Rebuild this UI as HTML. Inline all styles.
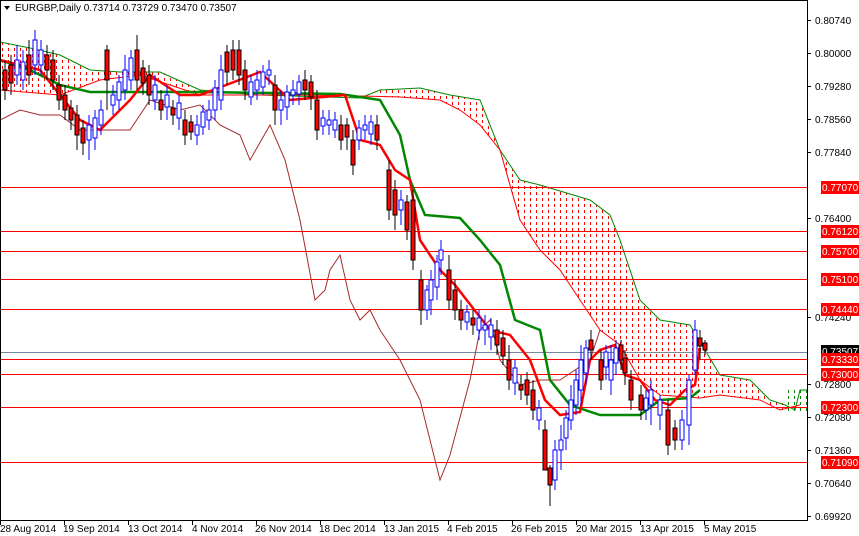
<!DOCTYPE html>
<html><head><meta charset="utf-8"><style>
html,body{margin:0;padding:0;background:#fff;width:859px;height:536px;overflow:hidden}
svg{display:block;font-family:"Liberation Sans",sans-serif}
</style></head><body>
<svg width="859" height="536" viewBox="0 0 859 536" xmlns="http://www.w3.org/2000/svg">
<defs>
<pattern id="rd" width="6" height="6" patternUnits="userSpaceOnUse"><rect x="2" y="0" width="1" height="3" fill="#f00"/></pattern>
<pattern id="gd" width="6" height="6" patternUnits="userSpaceOnUse"><rect x="2" y="0" width="1" height="3" fill="#080"/></pattern>
<clipPath id="pc"><rect x="0" y="0" width="807" height="520"/></clipPath>
</defs>
<rect width="859" height="536" fill="#fff"/>
<g clip-path="url(#pc)">
<polygon fill="url(#rd)" stroke="none" points="0,42 30,48 60,55 90,70 120,72 160,72 200,90 260,95 360,98 380,90 420,88 450,95 480,100 500,150 520,180 540,185 590,200 610,215 620,240 640,300 660,320 690,325 720,375 750,380 770,400 790,405 790,410 780,410 760,400 720,395 700,398 660,395 640,380 620,345 600,330 580,300 560,270 540,250 520,220 500,150 480,125 460,110 440,100 400,97 360,96 300,95 200,95 140,75 100,80 60,95 0,90"/>
<rect x="785" y="388" width="22" height="24" fill="url(#gd)"/>
<polyline fill="none" stroke="#080" stroke-width="1" points="0,42 30,48 60,55 90,70 120,72 160,72 200,90 260,95 360,98 380,90 420,88 450,95 480,100 500,150 520,180 540,185 590,200 610,215 620,240 640,300 660,320 690,325 720,375 750,380 770,400 785,405 795,410 800,390 809,390"/>
<polyline fill="none" stroke="#f00" stroke-width="1" points="0,90 60,95 100,80 140,75 200,95 300,95 360,96 400,97 440,100 460,110 480,125 500,150 520,220 540,250 560,270 580,300 600,330 620,345 640,380 660,395 700,398 720,395 760,400 780,410 800,405"/>
<g fill="#f00" shape-rendering="crispEdges">
<rect x="0" y="187" width="807" height="1"/><rect x="0" y="231" width="807" height="1"/>
<rect x="0" y="251" width="807" height="1"/><rect x="0" y="279" width="807" height="1"/>
<rect x="0" y="309" width="807" height="1"/><rect x="0" y="359" width="807" height="1"/>
<rect x="0" y="374" width="807" height="1"/><rect x="0" y="407" width="807" height="1"/>
<rect x="0" y="462" width="807" height="1"/>
</g>
<rect x="0" y="352" width="807" height="1" fill="#789" shape-rendering="crispEdges"/>
<polyline fill="none" stroke="#a52a2a" stroke-width="1" points="0,120 20,110 40,115 60,115 80,130 100,130 130,130 150,100 180,110 200,105 220,125 240,135 250,160 270,125 285,160 300,220 315,300 325,290 330,270 340,255 350,300 360,320 370,310 380,330 400,360 420,400 440,480 450,455 470,380 480,330 490,320 500,360 520,385 540,380 560,380 575,370 590,360 600,330"/>
<polyline fill="none" stroke="#080" stroke-width="2.5" points="0,60 30,70 60,85 90,92 200,92 340,94 380,100 400,135 410,180 425,215 460,218 480,240 500,265 515,320 540,330 550,380 570,405 600,415 640,415 660,400 690,398 700,390"/>
<polyline fill="none" stroke="#f00" stroke-width="2.5" points="0,60 40,70 80,120 100,130 130,100 150,75 180,95 200,95 260,72 290,100 345,95 360,140 380,145 395,170 410,180 420,240 440,270 455,285 490,330 510,335 530,360 545,400 560,415 580,412 590,360 600,350 615,345 625,375 640,380 655,400 670,405 685,390 695,385 700,348"/>
<g stroke-width="1">
<g stroke="#000" fill="#f00">
<line x1="5" y1="60" x2="5" y2="100"/><rect x="3" y="70" width="4" height="20"/>
<line x1="11" y1="55" x2="11" y2="95"/><rect x="9" y="65" width="4" height="18"/>
<line x1="29" y1="40" x2="29" y2="85"/><rect x="27" y="55" width="4" height="20"/>
<line x1="47" y1="45" x2="47" y2="80"/><rect x="45" y="55" width="4" height="15"/>
<line x1="53" y1="50" x2="53" y2="90"/><rect x="51" y="60" width="4" height="20"/>
<line x1="59" y1="75" x2="59" y2="110"/><rect x="57" y="85" width="4" height="15"/>
<line x1="65" y1="85" x2="65" y2="120"/><rect x="63" y="95" width="4" height="15"/>
<line x1="71" y1="100" x2="71" y2="130"/><rect x="69" y="108" width="4" height="12"/>
<line x1="77" y1="105" x2="77" y2="150"/><rect x="75" y="115" width="4" height="20"/>
<line x1="83" y1="120" x2="83" y2="155"/><rect x="81" y="128" width="4" height="15"/>
<line x1="107" y1="45" x2="107" y2="110"/><rect x="105" y="50" width="4" height="30"/>
<line x1="137" y1="35" x2="137" y2="90"/><rect x="135" y="50" width="4" height="30"/>
<line x1="143" y1="60" x2="143" y2="95"/><rect x="141" y="68" width="4" height="15"/>
<line x1="149" y1="65" x2="149" y2="105"/><rect x="147" y="75" width="4" height="20"/>
<line x1="161" y1="90" x2="161" y2="120"/><rect x="159" y="100" width="4" height="10"/>
<line x1="173" y1="100" x2="173" y2="125"/><rect x="171" y="108" width="4" height="7"/>
<line x1="185" y1="110" x2="185" y2="145"/><rect x="183" y="120" width="4" height="15"/>
<line x1="191" y1="115" x2="191" y2="140"/><rect x="189" y="122" width="4" height="10"/>
<line x1="227" y1="45" x2="227" y2="85"/><rect x="225" y="52" width="4" height="20"/>
<line x1="233" y1="40" x2="233" y2="80"/><rect x="231" y="50" width="4" height="20"/>
<line x1="239" y1="40" x2="239" y2="85"/><rect x="237" y="50" width="4" height="25"/>
<line x1="245" y1="60" x2="245" y2="100"/><rect x="243" y="70" width="4" height="20"/>
<line x1="275" y1="75" x2="275" y2="125"/><rect x="273" y="85" width="4" height="25"/>
<line x1="305" y1="70" x2="305" y2="100"/><rect x="303" y="80" width="4" height="10"/>
<line x1="311" y1="75" x2="311" y2="110"/><rect x="309" y="82" width="4" height="15"/>
<line x1="317" y1="90" x2="317" y2="140"/><rect x="315" y="100" width="4" height="30"/>
<line x1="341" y1="115" x2="341" y2="150"/><rect x="339" y="125" width="4" height="15"/>
<line x1="347" y1="118" x2="347" y2="150"/><rect x="345" y="125" width="4" height="12"/>
<line x1="353" y1="130" x2="353" y2="175"/><rect x="351" y="140" width="4" height="25"/>
<line x1="377" y1="115" x2="377" y2="150"/><rect x="375" y="125" width="4" height="15"/>
<line x1="389" y1="160" x2="389" y2="220"/><rect x="387" y="170" width="4" height="40"/>
<line x1="395" y1="180" x2="395" y2="230"/><rect x="393" y="190" width="4" height="25"/>
<line x1="407" y1="195" x2="407" y2="240"/><rect x="405" y="202" width="4" height="28"/>
<line x1="413" y1="190" x2="413" y2="270"/><rect x="411" y="200" width="4" height="60"/>
<line x1="421" y1="270" x2="421" y2="325"/><rect x="419" y="280" width="4" height="30"/>
<line x1="449" y1="255" x2="449" y2="310"/><rect x="447" y="270" width="4" height="30"/>
<line x1="455" y1="280" x2="455" y2="320"/><rect x="453" y="290" width="4" height="20"/>
<line x1="461" y1="300" x2="461" y2="330"/><rect x="459" y="310" width="4" height="10"/>
<line x1="473" y1="310" x2="473" y2="335"/><rect x="471" y="318" width="4" height="7"/>
<line x1="497" y1="320" x2="497" y2="355"/><rect x="495" y="330" width="4" height="15"/>
<line x1="503" y1="330" x2="503" y2="365"/><rect x="501" y="338" width="4" height="18"/>
<line x1="509" y1="345" x2="509" y2="390"/><rect x="507" y="360" width="4" height="20"/>
<line x1="521" y1="375" x2="521" y2="400"/><rect x="519" y="385" width="4" height="5"/>
<line x1="527" y1="372" x2="527" y2="405"/><rect x="525" y="380" width="4" height="15"/>
<line x1="533" y1="380" x2="533" y2="420"/><rect x="531" y="390" width="4" height="20"/>
<line x1="545" y1="420" x2="545" y2="470"/><rect x="543" y="430" width="4" height="40"/>
<line x1="550" y1="465" x2="550" y2="506"/><rect x="548" y="468" width="4" height="17"/>
<line x1="591" y1="330" x2="591" y2="360"/><rect x="589" y="340" width="4" height="10"/>
<line x1="601" y1="350" x2="601" y2="390"/><rect x="599" y="360" width="4" height="20"/>
<line x1="621" y1="340" x2="621" y2="370"/><rect x="619" y="345" width="4" height="15"/>
<line x1="625" y1="350" x2="625" y2="385"/><rect x="623" y="358" width="4" height="15"/>
<line x1="631" y1="370" x2="631" y2="410"/><rect x="629" y="380" width="4" height="20"/>
<line x1="641" y1="385" x2="641" y2="420"/><rect x="639" y="395" width="4" height="15"/>
<line x1="668" y1="400" x2="668" y2="455"/><rect x="666" y="410" width="4" height="35"/>
<line x1="675" y1="420" x2="675" y2="450"/><rect x="673" y="428" width="4" height="12"/>
<line x1="700" y1="330" x2="700" y2="360"/><rect x="698" y="338" width="4" height="8"/>
<line x1="705" y1="340" x2="705" y2="355"/><rect x="703" y="343" width="4" height="7"/>
</g>
<g stroke="#00f" fill="#fff">
<line x1="17" y1="45" x2="17" y2="85"/><rect x="15" y="60" width="4" height="15"/>
<line x1="23" y1="50" x2="23" y2="90"/><rect x="21" y="62" width="4" height="18"/>
<line x1="35" y1="30" x2="35" y2="75"/><rect x="33" y="40" width="4" height="25"/>
<line x1="41" y1="40" x2="41" y2="75"/><rect x="39" y="50" width="4" height="15"/>
<line x1="89" y1="115" x2="89" y2="160"/><rect x="87" y="125" width="4" height="15"/>
<line x1="95" y1="110" x2="95" y2="150"/><rect x="93" y="118" width="4" height="20"/>
<line x1="101" y1="100" x2="101" y2="135"/><rect x="99" y="110" width="4" height="15"/>
<line x1="113" y1="85" x2="113" y2="115"/><rect x="111" y="95" width="4" height="10"/>
<line x1="119" y1="75" x2="119" y2="110"/><rect x="117" y="82" width="4" height="18"/>
<line x1="125" y1="55" x2="125" y2="100"/><rect x="123" y="70" width="4" height="20"/>
<line x1="131" y1="50" x2="131" y2="90"/><rect x="129" y="58" width="4" height="22"/>
<line x1="155" y1="75" x2="155" y2="110"/><rect x="153" y="85" width="4" height="15"/>
<line x1="167" y1="85" x2="167" y2="120"/><rect x="165" y="95" width="4" height="12"/>
<line x1="179" y1="95" x2="179" y2="130"/><rect x="177" y="103" width="4" height="15"/>
<line x1="197" y1="115" x2="197" y2="145"/><rect x="195" y="125" width="4" height="10"/>
<line x1="203" y1="105" x2="203" y2="135"/><rect x="201" y="112" width="4" height="15"/>
<line x1="209" y1="100" x2="209" y2="130"/><rect x="207" y="110" width="4" height="10"/>
<line x1="215" y1="80" x2="215" y2="120"/><rect x="213" y="88" width="4" height="22"/>
<line x1="221" y1="55" x2="221" y2="110"/><rect x="219" y="70" width="4" height="30"/>
<line x1="251" y1="75" x2="251" y2="105"/><rect x="249" y="82" width="4" height="15"/>
<line x1="257" y1="70" x2="257" y2="100"/><rect x="255" y="80" width="4" height="10"/>
<line x1="263" y1="65" x2="263" y2="95"/><rect x="261" y="72" width="4" height="15"/>
<line x1="269" y1="60" x2="269" y2="85"/><rect x="267" y="70" width="4" height="5"/>
<line x1="281" y1="90" x2="281" y2="125"/><rect x="279" y="100" width="4" height="10"/>
<line x1="287" y1="85" x2="287" y2="120"/><rect x="285" y="92" width="4" height="15"/>
<line x1="293" y1="80" x2="293" y2="105"/><rect x="291" y="90" width="4" height="5"/>
<line x1="299" y1="75" x2="299" y2="105"/><rect x="297" y="82" width="4" height="12"/>
<line x1="323" y1="110" x2="323" y2="135"/><rect x="321" y="118" width="4" height="8"/>
<line x1="329" y1="110" x2="329" y2="135"/><rect x="327" y="120" width="4" height="5"/>
<line x1="335" y1="112" x2="335" y2="138"/><rect x="333" y="120" width="4" height="10"/>
<line x1="359" y1="120" x2="359" y2="150"/><rect x="357" y="128" width="4" height="12"/>
<line x1="365" y1="115" x2="365" y2="140"/><rect x="363" y="125" width="4" height="5"/>
<line x1="371" y1="115" x2="371" y2="145"/><rect x="369" y="122" width="4" height="12"/>
<line x1="401" y1="190" x2="401" y2="225"/><rect x="399" y="200" width="4" height="10"/>
<line x1="427" y1="285" x2="427" y2="320"/><rect x="425" y="290" width="4" height="20"/>
<line x1="431" y1="270" x2="431" y2="315"/><rect x="429" y="280" width="4" height="20"/>
<line x1="437" y1="255" x2="437" y2="300"/><rect x="435" y="262" width="4" height="25"/>
<line x1="441" y1="240" x2="441" y2="275"/><rect x="439" y="250" width="4" height="10"/>
<line x1="467" y1="305" x2="467" y2="330"/><rect x="465" y="312" width="4" height="10"/>
<line x1="479" y1="310" x2="479" y2="340"/><rect x="477" y="318" width="4" height="12"/>
<line x1="485" y1="315" x2="485" y2="345"/><rect x="483" y="325" width="4" height="5"/>
<line x1="491" y1="318" x2="491" y2="350"/><rect x="489" y="325" width="4" height="12"/>
<line x1="515" y1="360" x2="515" y2="395"/><rect x="513" y="368" width="4" height="15"/>
<line x1="539" y1="400" x2="539" y2="430"/><rect x="537" y="408" width="4" height="12"/>
<line x1="555" y1="440" x2="555" y2="490"/><rect x="553" y="450" width="4" height="30"/>
<line x1="561" y1="425" x2="561" y2="470"/><rect x="559" y="440" width="4" height="10"/>
<line x1="566" y1="410" x2="566" y2="450"/><rect x="564" y="418" width="4" height="20"/>
<line x1="571" y1="385" x2="571" y2="430"/><rect x="569" y="400" width="4" height="20"/>
<line x1="576" y1="370" x2="576" y2="415"/><rect x="574" y="380" width="4" height="25"/>
<line x1="581" y1="345" x2="581" y2="405"/><rect x="579" y="360" width="4" height="30"/>
<line x1="586" y1="340" x2="586" y2="385"/><rect x="584" y="348" width="4" height="25"/>
<line x1="606" y1="345" x2="606" y2="380"/><rect x="604" y="352" width="4" height="15"/>
<line x1="611" y1="345" x2="611" y2="395"/><rect x="609" y="360" width="4" height="20"/>
<line x1="616" y1="340" x2="616" y2="375"/><rect x="614" y="348" width="4" height="15"/>
<line x1="646" y1="390" x2="646" y2="420"/><rect x="644" y="398" width="4" height="12"/>
<line x1="651" y1="380" x2="651" y2="425"/><rect x="649" y="390" width="4" height="15"/>
<line x1="660" y1="395" x2="660" y2="430"/><rect x="658" y="400" width="4" height="15"/>
<line x1="682" y1="410" x2="682" y2="450"/><rect x="680" y="420" width="4" height="20"/>
<line x1="689" y1="375" x2="689" y2="445"/><rect x="687" y="380" width="4" height="45"/>
<line x1="695" y1="320" x2="695" y2="375"/><rect x="693" y="330" width="4" height="40"/>
</g>
</g>
</g>
<rect x="0.5" y="0.5" width="807" height="520" fill="none" stroke="#000"/>
<polygon points="4,6 10,6 7,10" fill="#000"/>
<text x="15" y="11" font-size="10" fill="#000">EURGBP,Daily  0.73714 0.73729 0.73470 0.73507</text>
<g font-size="10" fill="#000">
<g stroke="#000"><line x1="807" y1="20.5" x2="811" y2="20.5"/><line x1="807" y1="53.5" x2="811" y2="53.5"/><line x1="807" y1="86.5" x2="811" y2="86.5"/><line x1="807" y1="119.5" x2="811" y2="119.5"/><line x1="807" y1="152.5" x2="811" y2="152.5"/><line x1="807" y1="218.5" x2="811" y2="218.5"/><line x1="807" y1="317.5" x2="811" y2="317.5"/><line x1="807" y1="384.5" x2="811" y2="384.5"/><line x1="807" y1="417.5" x2="811" y2="417.5"/><line x1="807" y1="450.5" x2="811" y2="450.5"/><line x1="807" y1="483.5" x2="811" y2="483.5"/><line x1="807" y1="516.5" x2="811" y2="516.5"/></g>
<text x="815" y="24">0.80740</text><text x="815" y="57">0.80000</text><text x="815" y="90">0.79280</text><text x="815" y="123">0.78560</text><text x="815" y="156">0.77840</text><text x="815" y="222">0.76400</text><text x="815" y="321">0.74240</text><text x="815" y="388">0.72800</text><text x="815" y="421">0.72080</text><text x="815" y="454">0.71360</text><text x="815" y="487">0.70640</text><text x="815" y="520">0.69920</text>
</g>
<g font-size="10" fill="#fff">
<rect x="821" y="181" width="38" height="13" fill="#f00"/><text x="822" y="191">0.77070</text>
<rect x="821" y="225" width="38" height="13" fill="#f00"/><text x="822" y="235">0.76120</text>
<rect x="821" y="245" width="38" height="13" fill="#f00"/><text x="822" y="255">0.75700</text>
<rect x="821" y="273" width="38" height="13" fill="#f00"/><text x="822" y="283">0.75100</text>
<rect x="821" y="303" width="38" height="13" fill="#f00"/><text x="822" y="313">0.74440</text>
<rect x="821" y="345" width="38" height="12" fill="#000"/><text x="822" y="355">0.73507</text>
<rect x="821" y="353" width="38" height="13" fill="#f00"/><text x="822" y="363">0.73330</text>
<rect x="821" y="368" width="38" height="13" fill="#f00"/><text x="822" y="378">0.73000</text>
<rect x="821" y="401" width="38" height="13" fill="#f00"/><text x="822" y="411">0.72300</text>
<rect x="821" y="456" width="38" height="13" fill="#f00"/><text x="822" y="466">0.71090</text>
</g>
<g stroke="#000"><line x1="0.5" y1="520" x2="0.5" y2="525"/><line x1="64.5" y1="520" x2="64.5" y2="525"/><line x1="128.5" y1="520" x2="128.5" y2="525"/><line x1="192.5" y1="520" x2="192.5" y2="525"/><line x1="256.5" y1="520" x2="256.5" y2="525"/><line x1="320.5" y1="520" x2="320.5" y2="525"/><line x1="384.5" y1="520" x2="384.5" y2="525"/><line x1="448.5" y1="520" x2="448.5" y2="525"/><line x1="512.5" y1="520" x2="512.5" y2="525"/><line x1="576.5" y1="520" x2="576.5" y2="525"/><line x1="640.5" y1="520" x2="640.5" y2="525"/><line x1="704.5" y1="520" x2="704.5" y2="525"/></g>
<g font-size="10" fill="#000">
<text x="0" y="532">28 Aug 2014</text><text x="63" y="532">19 Sep 2014</text><text x="128" y="532">13 Oct 2014</text><text x="192" y="532">4 Nov 2014</text><text x="255" y="532">26 Nov 2014</text><text x="319" y="532">18 Dec 2014</text><text x="384" y="532">13 Jan 2015</text><text x="447" y="532">4 Feb 2015</text><text x="511" y="532">26 Feb 2015</text><text x="576" y="532">20 Mar 2015</text><text x="640" y="532">13 Apr 2015</text><text x="704" y="532">5 May 2015</text>
</g>
</svg>
</body></html>
